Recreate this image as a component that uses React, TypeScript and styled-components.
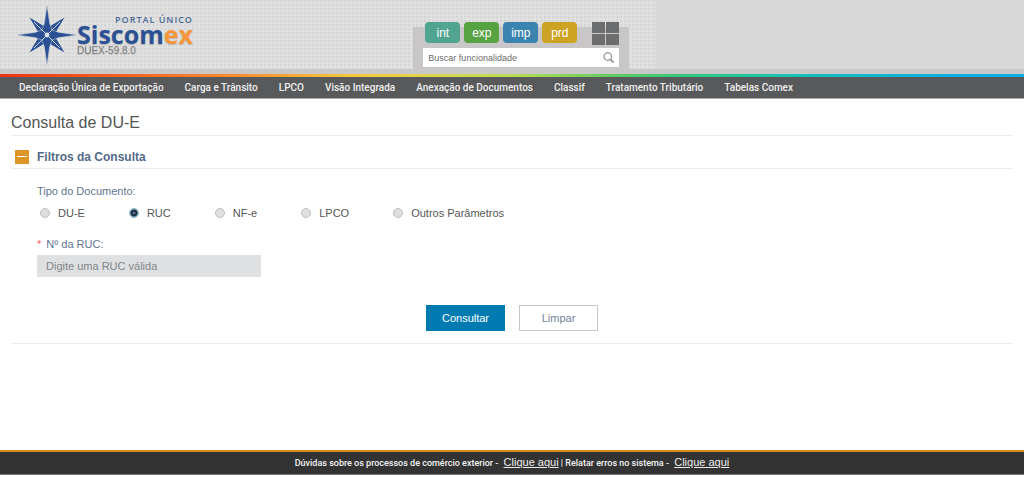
import React, { useState } from 'react';
import styled, { createGlobalStyle } from 'styled-components';

const GlobalStyle = createGlobalStyle`
  *, *::before, *::after { box-sizing: border-box; }
  body { margin: 0; background: #fff; font-family: "Liberation Sans", Arial, sans-serif; font-size: 11px; }
  button, input { font: inherit; }
`;

const Page = styled.div`
  display: flex;
  flex-direction: column;
  min-height: 100vh;
  padding-bottom: 2px;
`;

const Header = styled.header`
  background: #d8d8d8;
  border-bottom: 5px solid #c9c7c8;
`;

const Banner = styled.div`
  display: flex;
  justify-content: space-between;
  align-items: flex-end;
  width: 64%;
  min-height: 69px;
  padding: 0 26px 0 18px;
  background-color: #e1e1e1;
  background-image: radial-gradient(circle at 1px 1px, #d6d6d6 1px, transparent 2px);
  background-size: 4px 4px;
`;

const Brand = styled.a`
  display: flex;
  align-items: flex-start;
  align-self: flex-start;
  padding-top: 5px;
  text-decoration: none;
`;

const BrandText = styled.div`
  display: flex;
  flex-direction: column;
  padding: 9px 0 0 1px;
  font-family: "Open Sans", sans-serif;
`;

const Portal = styled.span`
  align-self: flex-end;
  color: #4a6896;
  font-size: 9px;
  font-weight: 600;
  letter-spacing: 1px;
  line-height: 12px;
`;

const BrandName = styled.span`
  color: #2b5194;
  font-size: 25px;
  font-weight: 700;
  line-height: 16px;
  text-shadow: 0 1px 1px #b4b4b4;

  em { color: #f7963a; font-style: normal; }
`;

const Version = styled.span`
  color: #7c7c7c;
  font-family: "Liberation Sans", Arial, sans-serif;
  font-size: 10px;
  line-height: 18px;
  text-shadow: 0 1px 1px #bbb;
`;

const QuickPanel = styled.div`
  width: 216px;
  padding: 0 10px 2px;
  background: #c9c6c7;
`;

const Shortcuts = styled.div`
  display: flex;
  gap: 4px;
  margin-top: -5px;
  padding-left: 2px;
`;

const Shortcut = styled.button<{ $color: string }>`
  width: 35px;
  height: 21px;
  padding: 0;
  border: 0;
  border-radius: 4px;
  background: ${(p) => p.$color};
  color: #fff;
  font-size: 12px;
  line-height: 20px;
`;

const GridButton = styled.button`
  display: grid;
  grid-template-columns: 1fr 1fr;
  gap: 1px;
  width: 27px;
  height: 23px;
  margin-left: auto;
  padding: 0;
  border: 0;
  background: none;

  span { background: #6c6d6f; }
`;

const Search = styled.form`
  display: flex;
  align-items: center;
  height: 19px;
  margin-top: 3px;
  padding: 0 5px;
  background: #fff;
`;

const SearchInput = styled.input`
  flex: 1;
  min-width: 0;
  padding: 0;
  border: 0;
  outline: 0;
  background: none;
  color: #6a6a6a;
  font-size: 9px;

  &::placeholder { color: #6a6a6a; opacity: 1; }
`;

const IconButton = styled.button`
  display: flex;
  padding: 0;
  border: 0;
  background: none;
  color: #a2a2a2;
`;

const Rainbow = styled.div`
  height: 3px;
  background: linear-gradient(90deg, #ee3411 0%, #f9882e 22%, #f5c63c 34%, #e6d348 40%, #b9dd55 50%, #5fcb62 60%, #2fc97c 67%, #12bfc0 80%, #0cb0e0 92%, #0cb0e8 100%);
`;

const Nav = styled.nav`
  display: flex;
  flex-wrap: wrap;
  gap: 0 21px;
  padding: 0 19px;
  background: #58595b;
  border-bottom: 1px solid #a9a9a9;

  a {
    color: #f0f0f0;
    font-family: Roboto, sans-serif;
    font-size: 10px;
    font-weight: 500;
    line-height: 21px;
    text-decoration: none;
    white-space: nowrap;
  }
`;

const Main = styled.main`
  flex: 1;
  padding: 14px 11px 16px;
`;

const Title = styled.h1`
  margin: 0;
  padding-bottom: 2px;
  border-bottom: 1px solid #eaeaea;
  color: #555;
  font-size: 16px;
  font-weight: 400;
  line-height: 20px;
`;

const Section = styled.section`
  border-bottom: 1px solid #eaeaea;
`;

const SectionHead = styled.div`
  display: flex;
  align-items: center;
  gap: 8px;
  height: 33px;
  padding: 9px 0 0 4px;
  border-bottom: 1px solid #eaeaea;

  h2 {
    margin: 0;
    color: #536a87;
    font-size: 12px;
    line-height: 16px;
  }
`;

const Collapse = styled.button`
  display: flex;
  align-items: center;
  justify-content: center;
  width: 14px;
  height: 14px;
  padding: 0;
  border: 0;
  background: #dc9526;

  span { width: 10px; height: 1px; background: #fff; }
`;

const Form = styled.form`
  padding: 15px 26px 12px;
`;

const Radios = styled.fieldset`
  display: flex;
  flex-wrap: wrap;
  gap: 0 44px;
  min-width: 0;
  margin: 0;
  padding: 0 3px;
  border: 0;

  legend { margin-left: -3px; padding: 0; color: #5f7590; line-height: 14px; }
`;

const RadioLabel = styled.label`
  display: flex;
  align-items: center;
  gap: 8px;
  margin-top: 8px;
  color: #555;
  line-height: 14px;
`;

const Radio = styled.input`
  appearance: none;
  width: 10px;
  height: 10px;
  margin: 0;
  border: 1px solid #bdbdbd;
  border-radius: 50%;
  background: #dedfe0;

  &:checked {
    border-color: #7fb3c9;
    background: radial-gradient(circle, #4f7096 0 1px, #1f2c3b 2px 3px, #8fbccd 4px);
  }
`;

const FieldLabel = styled.label`
  display: block;
  margin-top: 17px;
  color: #5f7590;
  line-height: 14px;

  span { margin-right: 5px; color: #f0595c; }
`;

const TextField = styled.input`
  display: block;
  width: 224px;
  max-width: 100%;
  height: 22px;
  margin-top: 4px;
  padding: 0 9px;
  border: 0;
  background: #dfe0e1;
  color: #80868c;

  &::placeholder { color: #80868c; opacity: 1; }
`;

const Actions = styled.div`
  display: flex;
  justify-content: center;
  gap: 14px;
  margin-top: 28px;
`;

const Action = styled.button<{ $primary?: boolean }>`
  width: 79px;
  height: 26px;
  padding: 0;
  border: ${(p) => (p.$primary ? '0' : '1px solid #c4c8cc')};
  background: ${(p) => (p.$primary ? '#007bb2' : '#fff')};
  color: ${(p) => (p.$primary ? '#fff' : '#71849b')};
`;

const Footer = styled.footer`
  border-top: 2px solid #d68b1c;
  border-bottom: 1px solid #777;
  background: #333;
  color: #f4f4f4;
  font-family: Roboto, sans-serif;
  font-size: 9px;
  font-weight: 500;
  line-height: 21px;
  text-align: center;

  a { margin-left: 3px; color: #eee; font-family: "Liberation Sans", Arial, sans-serif; font-size: 11px; font-weight: 400; }
`;

const shortcuts = [
  { label: 'int', color: '#51a490' },
  { label: 'exp', color: '#57a243' },
  { label: 'imp', color: '#3b84b0' },
  { label: 'prd', color: '#cca323' },
];

const menu = [
  'Declaração Única de Exportação',
  'Carga e Trânsito',
  'LPCO',
  'Visão Integrada',
  'Anexação de Documentos',
  'Classif',
  'Tratamento Tributário',
  'Tabelas Comex',
];

const documentTypes = ['DU-E', 'RUC', 'NF-e', 'LPCO', 'Outros Parâmetros'];

function Star() {
  return (
    <svg width="58" height="60" viewBox="-29 -30 58 60" aria-hidden="true">
      <path fill="#2b5194" d="M17.5-17.5 7 0 17.5 17.5 0 7-17.5 17.5-7 0-17.5-17.5 0-7Z" />
      <path
        fill="#2b5194"
        stroke="#cfd5df"
        strokeWidth="0.5"
        d="M0-30 2.6-12 5-5 12-2.6 30 0 12 2.6 5 5 2.6 12 0 30-2.6 12-5 5-12 2.6-30 0-12-2.6-5-5-2.6-12Z"
      />
      <path d="M-13-13 13 13M13-13-13 13" stroke="#cfd5df" strokeWidth="1" />
      <circle r="2.4" fill="#dde1e8" />
    </svg>
  );
}

export default function App() {
  const [selected, setSelected] = useState('RUC');
  return (
    <Page>
      <GlobalStyle />
      <Header>
        <Banner>
          <Brand href="#" aria-label="Portal Único Siscomex">
            <Star />
            <BrandText>
              <Portal>PORTAL ÚNICO</Portal>
              <BrandName>Siscom<em>ex</em></BrandName>
              <Version>DUEX-59.8.0</Version>
            </BrandText>
          </Brand>
          <QuickPanel>
            <Shortcuts>
              {shortcuts.map((s) => (
                <Shortcut key={s.label} type="button" $color={s.color}>{s.label}</Shortcut>
              ))}
              <GridButton type="button" aria-label="Menu"><span /><span /><span /><span /></GridButton>
            </Shortcuts>
            <Search onSubmit={(e) => e.preventDefault()}>
              <SearchInput aria-label="Buscar funcionalidade" placeholder="Buscar funcionalidade" />
              <IconButton aria-label="Buscar">
                <svg width="11" height="11" viewBox="0 0 11 11" fill="none" stroke="currentColor">
                  <circle cx="4.8" cy="4.6" r="3.8" strokeWidth="1.5" />
                  <path d="M7.6 7.5 10 10" strokeWidth="1.9" strokeLinecap="round" />
                </svg>
              </IconButton>
            </Search>
          </QuickPanel>
        </Banner>
      </Header>
      <Rainbow />
      <Nav>
        {menu.map((m) => <a key={m} href="#">{m}</a>)}
      </Nav>
      <Main>
        <Title>Consulta de DU-E</Title>
        <Section>
          <SectionHead>
            <Collapse type="button" aria-label="Recolher filtros"><span /></Collapse>
            <h2>Filtros da Consulta</h2>
          </SectionHead>
          <Form onSubmit={(e) => e.preventDefault()}>
            <Radios>
              <legend>Tipo do Documento:</legend>
              {documentTypes.map((t) => (
                <RadioLabel key={t}>
                  <Radio type="radio" name="tipo" checked={selected === t} onChange={() => setSelected(t)} />
                  {t}
                </RadioLabel>
              ))}
            </Radios>
            <FieldLabel htmlFor="ruc"><span>*</span>Nº da RUC:</FieldLabel>
            <TextField id="ruc" placeholder="Digite uma RUC válida" />
            <Actions>
              <Action $primary type="submit">Consultar</Action>
              <Action type="reset">Limpar</Action>
            </Actions>
          </Form>
        </Section>
      </Main>
      <Footer>
        Dúvidas sobre os processos de comércio exterior - <a href="#">Clique aqui</a> | Relatar erros no sistema - <a href="#">Clique aqui</a>
      </Footer>
    </Page>
  );
}
